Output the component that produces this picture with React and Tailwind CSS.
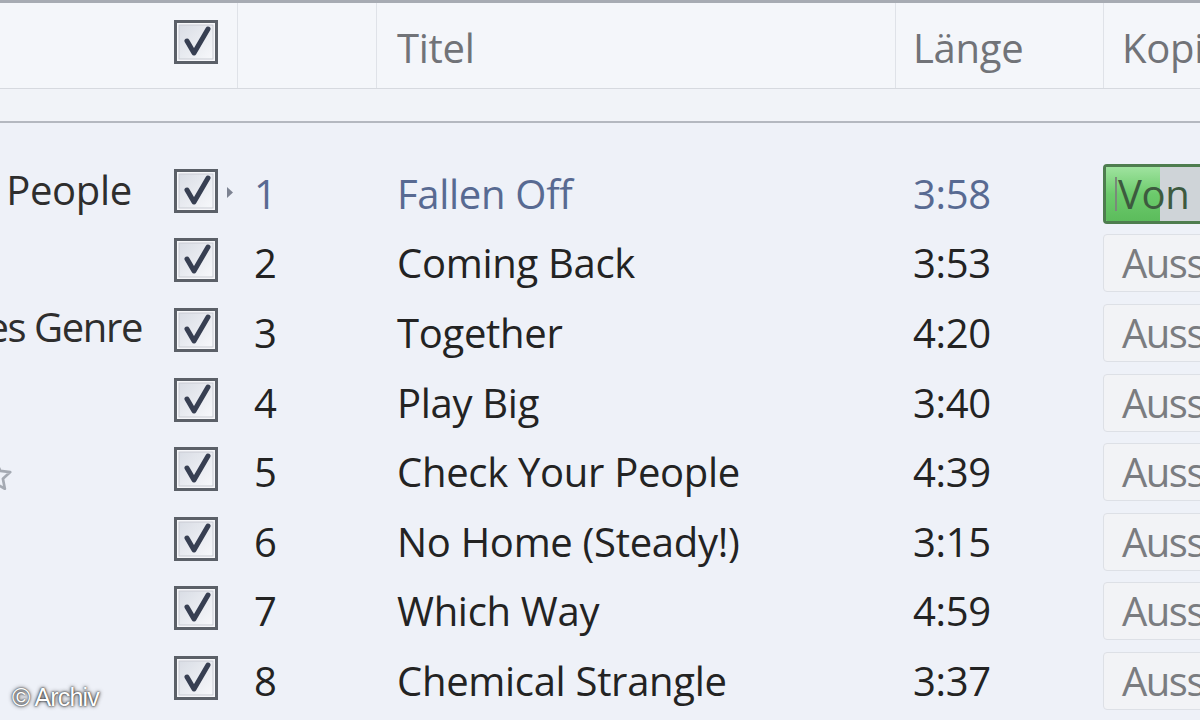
import React from "react";

function Check() {
  return (
    <svg width="44" height="44" viewBox="0 0 44 44" className="block shrink-0">
      <defs>
        <linearGradient id="cbg" x1="0" y1="0" x2="1" y2="1">
          <stop offset="0" stopColor="#d9dde5" />
          <stop offset="1" stopColor="#f7f8fb" />
        </linearGradient>
      </defs>
      <rect x="1.5" y="1.5" width="41" height="41" fill="#f6f7fa" stroke="#5b6068" strokeWidth="3" />
      <rect x="5" y="5" width="34" height="34" fill="url(#cbg)" stroke="#c9ccd3" strokeWidth="1" />
      <path d="M13 21 L20 33 L34 9" fill="none" stroke="#373f52" strokeWidth="5" strokeLinecap="round" strokeLinejoin="round" />
    </svg>
  );
}

const tracks = [
  ["1", "Fallen Off", "3:58"],
  ["2", "Coming Back", "3:53"],
  ["3", "Together", "4:20"],
  ["4", "Play Big", "3:40"],
  ["5", "Check Your People", "4:39"],
  ["6", "No Home (Steady!)", "3:15"],
  ["7", "Which Way", "4:59"],
  ["8", "Chemical Strangle", "3:37"],
];

function LeftInfo({ i }) {
  if (i === 0)
    return (
      <div className="flex h-full items-center justify-end pr-[28px] pb-[8px] text-[#2e2e2e] whitespace-nowrap">People</div>
    );
  if (i === 2)
    return (
      <div className="flex h-full items-center justify-end pr-[18px] pb-[12px] text-[#2e2e2e] whitespace-nowrap tracking-[-1.4px]">
        es Genre
      </div>
    );
  if (i === 4)
    return (
      <div className="flex h-full items-center pt-[8px]">
        <svg width="36" height="36" viewBox="0 0 24 24" className="ml-[-22px] shrink-0">
          <path
            d="M12 2.5l2.9 6.1 6.6.8-4.9 4.5 1.3 6.6L12 17.2l-5.9 3.3 1.3-6.6-4.9-4.5 6.6-.8z"
            fill="none"
            stroke="#a5aab3"
            strokeWidth="1.8"
            strokeLinejoin="round"
          />
        </svg>
      </div>
    );
  return null;
}

function Status({ first }) {
  if (first)
    return (
      <div className="h-[60px] w-[110px] shrink-0 rounded-[4px] border-[3px] border-[#4e7d4f] bg-[#cfd4d8] relative overflow-hidden flex items-center">
        <div className="absolute left-0 top-0 bottom-0 w-[54px] bg-gradient-to-b from-[#9fe39f] via-[#6ccb6c] to-[#5cbc5c]" />
        <div className="absolute left-[9px] top-[10px] bottom-[10px] w-[2px] bg-[#7a8a7a]" />
        <span className="relative pl-[12px] text-[#3d5a3f] whitespace-nowrap">Von CD</span>
      </div>
    );
  return (
    <div className="h-[58px] w-[110px] shrink-0 rounded-[4px] border border-[#dde0e6] bg-[#f2f3f6] flex items-center overflow-hidden">
      <span className="pl-[18px] text-[#7a7c80] whitespace-nowrap tracking-[-1.5px]">Ausstehend</span>
    </div>
  );
}

export default function App() {
  return (
    <div className="w-[1200px] h-[720px] overflow-hidden bg-[#eef1f8] relative font-['Open_Sans',sans-serif] text-[40px] leading-none tracking-[-0.3px]">
      {/* header */}
      <div className="h-[89px] border-t-[3px] border-[#a7abb3] border-b border-b-[#d6d9df] bg-[#f4f6fa] flex text-[#717378] overflow-hidden">
        <div className="w-[160px] shrink-0" />
        <div className="w-[77px] shrink-0 flex items-center pl-[14px] pb-[8px]">
          <Check />
        </div>
        <div className="w-[139px] shrink-0 border-l border-[#dfe2e8]" />
        <div className="w-[519px] shrink-0 border-l border-[#dfe2e8] flex items-center pl-[20px] pt-[4px]">Titel</div>
        <div className="w-[208px] shrink-0 border-l border-[#dfe2e8] flex items-center pl-[17px] pt-[4px]">Länge</div>
        <div className="w-[120px] shrink-0 border-l border-[#dfe2e8] flex items-center pl-[18px] pt-[4px] whitespace-nowrap overflow-hidden">
          Kopieren
        </div>
      </div>
      {/* band */}
      <div className="h-[34px] bg-[#f1f3f8] border-b-[2px] border-[#b4b8c0]" />
      {/* rows */}
      <div className="pt-[36px]">
        {tracks.map(([n, t, l], i) => {
          const active = i === 0;
          const txt = active ? "text-[#586a92]" : "text-[#232323]";
          return (
            <div key={n} className="h-[69.6px] flex items-center overflow-hidden">
              <div className="w-[160px] shrink-0 h-full overflow-hidden">
                <LeftInfo i={i} />
              </div>
              <div className="w-[58px] shrink-0 pl-[14px] flex items-center pb-[6px]">
                <Check />
              </div>
              <div className="w-[19px] shrink-0 flex items-center pl-[8px] pb-[2px]">
                {active && (
                  <svg width="8" height="13" viewBox="0 0 8 13" className="shrink-0">
                    <path d="M1 1 L7 6.5 L1 12 Z" fill="#7d8392" />
                  </svg>
                )}
              </div>
              <div className={`w-[139px] shrink-0 pl-[17px] ${txt}`}>{n}</div>
              <div className={`w-[519px] shrink-0 pl-[21px] whitespace-nowrap ${txt}`}>{t}</div>
              <div className={`w-[208px] shrink-0 pl-[18px] ${txt}`}>{l}</div>
              <div className="w-[110px] shrink-0 flex items-center">
                <Status first={active} />
              </div>
            </div>
          );
        })}
      </div>
      <div className="absolute left-[12px] bottom-[10px] text-white text-[25px] font-['Liberation_Sans',sans-serif] tracking-[-0.8px] [text-shadow:0_0_2px_#111,0_0_4px_#333]">
        © Archiv
      </div>
    </div>
  );
}
